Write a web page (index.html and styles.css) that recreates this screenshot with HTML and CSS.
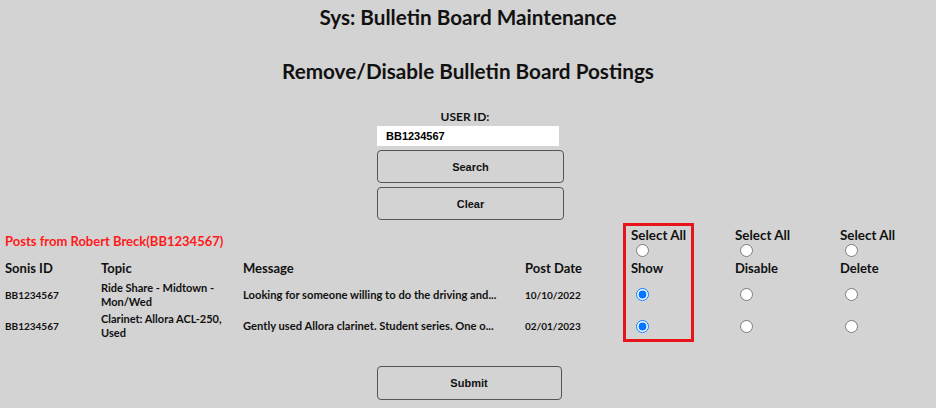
FILE: index.html
```html
<!DOCTYPE html>
<html>
<head>
<meta charset="utf-8">
<link rel="stylesheet" href="styles.css">
</head>
<body>
<div class="page">
  <h1 class="title">Sys: Bulletin Board Maintenance</h1>
  <h2 class="subtitle">Remove/Disable Bulletin Board Postings</h2>
  <div class="search">
    <label class="uid-label" for="uid">USER ID:</label>
    <input id="uid" class="uid-input" type="text" value="BB1234567">
    <button class="btn">Search</button>
    <button class="btn">Clear</button>
  </div>
  <div class="posts">
    <div class="owner">Posts from Robert Breck(BB1234567)</div>
    <div class="highlight"></div>
    <div class="sel c5"><span>Select All</span><input type="radio" name="all"></div>
    <div class="sel c6"><span>Select All</span><input type="radio" name="all"></div>
    <div class="sel c7"><span>Select All</span><input type="radio" name="all"></div>

    <div class="hd c1">Sonis ID</div>
    <div class="hd c2">Topic</div>
    <div class="hd c3">Message</div>
    <div class="hd c4">Post Date</div>
    <div class="hd c5">Show</div>
    <div class="hd c6">Disable</div>
    <div class="hd c7">Delete</div>

    <div class="cell r3 c1">BB1234567</div>
    <div class="cell r3 c2 topic">Ride Share - Midtown - Mon/Wed</div>
    <div class="cell r3 c3 msg">Looking for someone willing to do the driving and...</div>
    <div class="cell r3 c4">10/10/2022</div>
    <div class="cell r3 c5"><input type="radio" name="r1" checked></div>
    <div class="cell r3 c6"><input type="radio" name="r1"></div>
    <div class="cell r3 c7"><input type="radio" name="r1"></div>

    <div class="cell r4 c1">BB1234567</div>
    <div class="cell r4 c2 topic">Clarinet: Allora ACL-250, Used</div>
    <div class="cell r4 c3 msg">Gently used Allora clarinet. Student series. One o...</div>
    <div class="cell r4 c4">02/01/2023</div>
    <div class="cell r4 c5"><input type="radio" name="r2" checked></div>
    <div class="cell r4 c6"><input type="radio" name="r2"></div>
    <div class="cell r4 c7"><input type="radio" name="r2"></div>
  </div>
  <div class="submit-row">
    <button class="btn submit">Submit</button>
  </div>
</div>
</body>
</html>
```
FILE: styles.css
```css
html, body {
  margin: 0;
  padding: 0;
  background: #d3d3d3;
}
body {
  font-family: Lato, "Liberation Sans", sans-serif;
  font-weight: 700;
  color: #111;
}
.page {
  width: 936px;
  height: 408px;
  overflow: hidden;
}
.title {
  margin: 0;
  padding-top: 5px;
  font-size: 20.7px;
  line-height: 24px;
  text-align: center;
  font-weight: 700;
}
.subtitle {
  margin: 30px 0 0 0;
  font-size: 20.7px;
  line-height: 24px;
  text-align: center;
  font-weight: 700;
}
.search {
  display: flex;
  flex-direction: column;
  align-items: flex-start;
  width: 187px;
  margin: 27px auto 0 auto;
  padding-left: 5px;
}
.uid-label {
  align-self: center;
  font-size: 12px;
  line-height: 14px;
  margin-left: -11px;
}
.uid-input {
  margin: 2px 0 0 0;
  width: 182px;
  height: 20px;
  box-sizing: border-box;
  border: none;
  background: #fff;
  padding: 0 9px;
  font-family: "Liberation Sans", Arial, sans-serif;
  font-weight: 700;
  font-size: 11px;
  color: #000;
  outline: none;
}
.btn {
  width: 187px;
  height: 33px;
  box-sizing: border-box;
  margin-top: 4px;
  border: 1px solid #555;
  border-radius: 4px;
  background: #d3d3d3;
  font-family: "Liberation Sans", Arial, sans-serif;
  font-weight: 700;
  font-size: 11px;
  color: #111;
}
.posts {
  display: grid;
  grid-template-columns: 96px 142px 282px 106px 104px 105px 1fr;
  grid-template-rows: 36px 18px 35px 28px;
  padding-left: 5px;
  margin-top: 3px;
}
.owner {
  grid-column: 1 / 5;
  grid-row: 1;
  align-self: center;
  color: #ff1a1a;
  font-size: 13px;
  line-height: 15px;
}
.highlight {
  grid-column: 5;
  grid-row: 1 / 5;
  justify-self: start;
  width: 71px;
  margin-left: -8px;
  margin-bottom: -2px;
  box-sizing: border-box;
  border: 3px solid #e8141b;
}
.sel {
  grid-row: 1;
  display: flex;
  flex-direction: column;
  align-items: flex-start;
  font-size: 13.4px;
  line-height: 15px;
  padding-top: 5px;
}
.sel input {
  margin: 1px 0 0 5px;
}
.c1 { grid-column: 1; }
.c2 { grid-column: 2; }
.c3 { grid-column: 3; }
.c4 { grid-column: 4; }
.c5 { grid-column: 5; }
.c6 { grid-column: 6; }
.c7 { grid-column: 7; }
.r3 { grid-row: 3; }
.r4 { grid-row: 4; }
.hd {
  grid-row: 2;
  font-size: 13px;
  line-height: 18px;
}
.cell {
  font-size: 10px;
  line-height: 14px;
  align-self: center;
}
.cell input {
  margin: 0 0 0 5px;
  display: block;
}
.topic {
  font-size: 11px;
  width: 128px;
}
.msg {
  font-size: 11.2px;
}
.submit-row {
  display: flex;
  justify-content: center;
  margin-top: 22px;
  padding-left: 2px;
}
.submit {
  width: 185px;
  height: 34px;
}
```
